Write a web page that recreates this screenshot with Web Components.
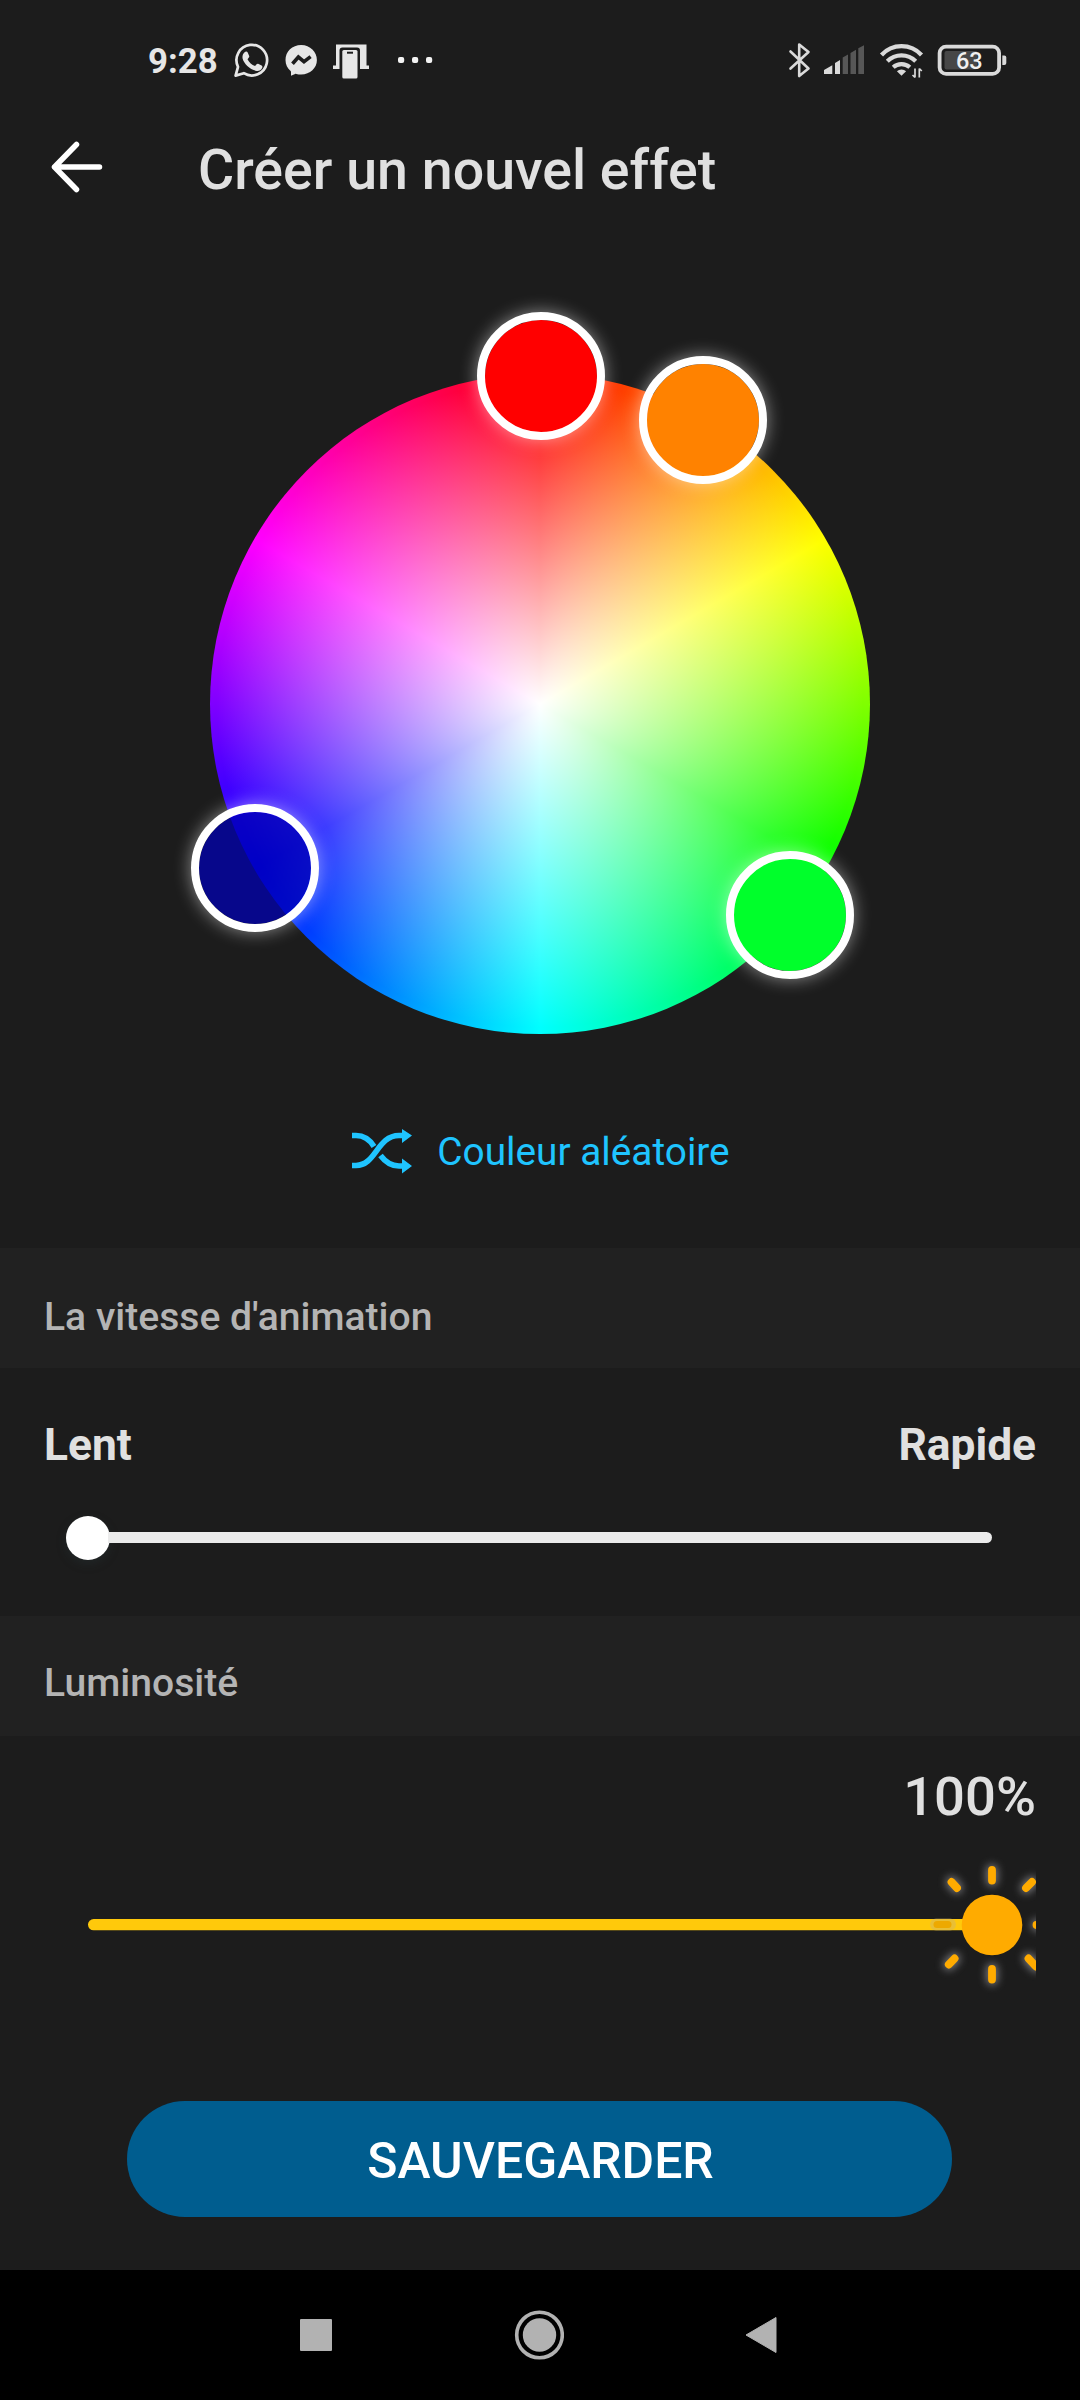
<!DOCTYPE html>
<html lang="fr">
<head>
<meta charset="utf-8">
<title>Créer un nouvel effet</title>
<style>
html,body{margin:0;padding:0;background:#1c1c1c}
body{width:1080px;height:2400px;overflow:hidden;font-family:Roboto,"Noto Sans",sans-serif;color:#e0e0e0}
</style>
</head>
<body>
<effect-screen></effect-screen>
<script>
const define = (name, html, setup) => customElements.define(name, class extends HTMLElement {
  constructor() {
    super();
    const t = document.createElement('template');
    t.innerHTML = html;
    this.attachShadow({mode: 'open'}).append(t.content.cloneNode(true));
  }
  connectedCallback() { if (setup) setup(this, this.shadowRoot); }
});

define('status-bar', `
<style>
:host{display:flex;height:120px;box-sizing:border-box;padding:0 72px 0 148px;justify-content:space-between;align-items:center;color:#e6e6e6}
div{display:flex;align-items:center;height:120px}
.time{font-size:34.8px;font-weight:700;line-height:40px;width:85px;padding-top:1px;box-sizing:border-box}
svg{display:block;flex:none}
</style>
<div>
  <span class="time">9:28</span>
  <svg width="210" height="120" viewBox="233 0 210 120">
    <path d="M235.6 75.6 L238 66.8 A15.3 15.3 0 1 1 243.8 73.2 Z" fill="none" stroke="#e6e6e6" stroke-width="2.7" stroke-linejoin="round"/>
    <path d="M244.6 52.2c1-.9 2.6-.9 3.1.3l1.5 3.6c.3.8-.2 1.5-1.7 3.1 1.8 3.4 4.2 5.5 7.6 6.9 1.6-2 2.1-2.7 3-2.3l3.5 1.7c1 .5.9 1.6.5 2.6-.8 2.1-3.3 3.2-5.3 2.9-6.9-1.2-12.9-7.3-14.2-12.5-.5-2.6.4-4.9 2-6.3z" fill="#e6e6e6"/>
    <path d="M301.2 45C292.2 45 285.5 51.5 285.5 60c0 4.600 1.900 8.400 5.100 11.100.3.300.4.700.4 1.100v3.600l4.100-1.800c.4-.2.800-.2 1.200-.1 1.600.4 3.200.6 4.900.6 9 0 15.700-6.500 15.700-14.500S310.200 45 301.200 45z" fill="#e6e6e6"/>
    <path d="M292.500 63.800 L298.400 57 L304 61.600 L310.600 56.600" fill="none" stroke="#1c1c1c" stroke-width="3.600" stroke-linejoin="miter"/>
    <path d="M336 44.500h30.500v21h2.500v3.500h-36v-3.500h3z" fill="#e6e6e6"/>
    <rect x="339.500" y="47.500" width="20.500" height="33" rx="3" fill="#1c1c1c"/>
    <rect x="342.300" y="50" width="15.200" height="28.500" rx="1.500" fill="#e6e6e6"/>
    <path d="M347 52.700h6" stroke="#1c1c1c" stroke-width="2"/>
    <g fill="#f2f2f2"><rect x="398" y="57" width="6.200" height="6" rx="2"/><rect x="412" y="57" width="6.200" height="6" rx="2"/><rect x="426" y="57" width="6.200" height="6" rx="2"/></g>
  </svg>
</div>
<svg width="222" height="120" viewBox="786 0 222 120">
  <path d="M790.500 51.500 L808.500 68.500 L799.200 76 V44.500 L808.500 52 L790.500 68.500" fill="none" stroke="#dadada" stroke-width="2.600" stroke-linejoin="round" stroke-linecap="round"/>
  <path d="M824 74v-4l8.300-4.800V74z M835 74V63l5-3v14z" fill="#dadada"/>
  <path d="M842.700 74V57.500l5.300-3V74z M850.500 74V53l5.500-3.200V74z M858.300 74V48.300l5.700-3V74z" fill="#575757"/>
  <g fill="none" stroke="#dadada" stroke-width="4.200">
    <path d="M881.500 55a27 27 0 0 1 40 0"/>
    <path d="M887.300 61.200a20 20 0 0 1 28.400 0"/>
    <path d="M893.200 67.200a12.500 12.500 0 0 1 16.600 0"/>
  </g>
  <path d="M901.500 75.800l-4.600-4.600a6.800 6.800 0 0 1 9.200 0z" fill="#dadada"/>
  <path d="M915 68.500v9M912.500 75l2.500 2.500M919.300 77.500v-9M921.800 71l-2.500-2.500" fill="none" stroke="#dadada" stroke-width="1.700"/>
  <rect x="939.600" y="46.600" width="59.500" height="27.300" rx="6.500" fill="none" stroke="#dadada" stroke-width="3.800"/>
  <rect x="944.500" y="51" width="33" height="18.500" rx="2" fill="#474747"/>
  <path d="M1002.300 55.500h2a2 2 0 0 1 2 2v5.500a2 2 0 0 1-2 2h-2z" fill="#dadada"/>
  <text x="969.300" y="69" text-anchor="middle" font-size="23.500" font-weight="500" fill="#f0f0f0" font-family="Roboto,sans-serif">63</text>
</svg>`);

define('app-header', `
<style>
:host{display:flex;height:100px;align-items:center;padding-left:50px;box-sizing:border-box}
svg{display:block;flex:none;width:54px;margin-bottom:6px}
h1{margin:0 0 0 94px;font-size:55.5px;font-weight:500;line-height:64px;padding-top:2px;white-space:nowrap;color:#e0e0e0}
</style>
<svg width="54" height="60" viewBox="50 137 54 60"><path d="M76.500 144.500L54.500 167L76.500 189.500M54.500 167H99.500" fill="none" stroke="#fff" stroke-width="5.500" stroke-linecap="round" stroke-linejoin="round"/></svg>
<h1><slot></slot></h1>`);

define('color-handle', `
<style>
:host{position:absolute;width:112px;height:112px;border:8px solid #fff;border-radius:50%;background:var(--fill);background-clip:padding-box;transform:translate(-50%,-50%);box-shadow:0 0 17px 0 rgba(255,255,255,.5)}
</style>`, el => {
  el.style.left = el.getAttribute('x') + 'px';
  el.style.top = el.getAttribute('y') + 'px';
  el.style.setProperty('--fill', el.getAttribute('color'));
});

define('color-wheel', `
<style>
:host{display:flex;justify-content:center;height:660px;margin-top:154px}
.disc{position:relative;width:660px;height:660px;border-radius:50%;background:radial-gradient(circle closest-side,#fff 0%,rgba(255,255,255,0) 98%),conic-gradient(#f00,#ff0,#0f0,#0ff,#00f,#f0f,#f00)}
</style>
<div class="disc"><slot></slot></div>`);

define('random-color', `
<style>
:host{display:flex;justify-content:center;align-items:center;height:60px;margin-top:88px;color:#1fc4ff;font-size:38.8px;line-height:46px}
svg{display:block;margin-right:25px}
span{white-space:nowrap}
</style>
<svg width="62" height="46" viewBox="350 1129 62 46">
  <g fill="none" stroke="#1fc4ff" stroke-width="5.600">
    <path d="M352 1165.500H356C376 1165.500 377 1135.500 399 1135.500H403"/>
    <path d="M352 1135.500H356C365 1135.500 370 1140 374 1146.500M380.500 1155.500C385 1161.500 390 1166 399 1166H403"/>
  </g>
  <path d="M402 1129L412 1135.500L402 1143ZM402 1158.500L412 1166L402 1173.500Z" fill="#1fc4ff"/>
</svg>
<span><slot></slot></span>`);

define('section-title', `
<style>
:host{display:flex;height:120px;align-items:center;padding:17px 44px 0;box-sizing:border-box;background:#212121;color:#b4b4b4;font-size:39.1px;font-weight:500;line-height:46px}
:host([compact]){padding-top:13px}
</style><slot></slot>`);

define('speed-slider', `
<style>
:host{display:block;height:248px;box-sizing:border-box;padding:50px 44px 0}
.labels{display:flex;justify-content:space-between;font-size:44.3px;font-weight:700;line-height:54px;color:#e0e0e0}
.row{display:flex;align-items:center;margin-top:43.5px;height:44px;padding:0 44px 0 22px}
.thumb{width:44px;height:44px;border-radius:50%;background:#fff;flex:none;box-shadow:0 4px 10px rgba(40,55,58,.35)}
.track{flex:1;height:11px;margin-left:-2px;border-radius:0 6px 6px 0;background:#ebebeb}
</style>
<div class="labels"><slot name="low"></slot><slot name="high"></slot></div>
<div class="row"><div class="thumb"></div><div class="track"></div></div>`);

define('brightness-slider', `
<style>
:host{display:block;height:365px;box-sizing:border-box;padding:28px 44px 0}
.value{text-align:right;font-size:54.4px;font-weight:500;line-height:66px;color:#e0e0e0}
svg{display:block;margin-top:25px}
</style>
<div class="value"><slot></slot></div>
<svg width="992" height="140" viewBox="44 1855 992 140">
  <defs><filter id="halo" x="-60%" y="-60%" width="220%" height="220%"><feGaussianBlur stdDeviation="4"/></filter>
  <g id="rays" stroke-linecap="round" fill="none">
    <path d="M992 1870V1880.500M992 1969V1979.500M951.500 1882L957 1888M1032 1882L1026 1888M948.800 1964.500L954.600 1958.500M1028.500 1958.500L1036 1966.500M1036.500 1925H1047"/>
  </g></defs>
  <rect x="88" y="1919" width="900" height="11.300" rx="5.600" fill="#ffc90b"/>
  <use href="#rays" stroke="#909094" stroke-width="11" filter="url(#halo)" opacity=".85"/>
  <path d="M936 1924.500H950" stroke="#d0b468" stroke-width="12" stroke-linecap="round" opacity=".45"/>
  <path d="M937 1924.500H948" stroke="#eda900" stroke-width="7" stroke-linecap="round"/>
  <use href="#rays" stroke="#ffab00" stroke-width="7.800"/>
  <circle cx="992" cy="1925" r="30.300" fill="#ffab00"/>
</svg>`);

define('save-button', `
<style>
:host{display:flex;justify-content:center;height:169px;padding-right:2px}
button{all:unset;display:flex;align-items:center;justify-content:center;width:825px;height:116px;border-radius:58px;background:#005d8f;color:#fff;font:500 49.9px/60px Roboto,sans-serif;padding:3px 0 0 3px;box-sizing:border-box}
</style><button><slot></slot></button>`);

define('nav-bar', `
<style>
:host{display:flex;height:130px;background:#000;align-items:center;justify-content:space-between;padding:0 303px 0 300px;box-sizing:border-box}
svg{display:block}
</style>
<svg width="32" height="38"><rect y="3" width="32" height="32" rx="1" fill="#b2b2b2"/></svg>
<svg width="50" height="50"><circle cx="25.500" cy="25" r="22.800" fill="none" stroke="#b2b2b2" stroke-width="3.600"/><circle cx="25.500" cy="25" r="16.700" fill="#b2b2b2"/></svg>
<svg width="32" height="38"><path d="M1 19L31 1.500V36.500Z" fill="#b2b2b2" stroke="#b2b2b2" stroke-linejoin="round"/></svg>`);

define('effect-screen', `
<style>:host{display:flex;flex-direction:column;width:1080px;height:2400px;background:#1c1c1c;overflow:hidden}
:host>*{flex:none}
random-color{margin-bottom:66px}</style>
<status-bar></status-bar>
<app-header>Créer un nouvel effet</app-header>
<color-wheel>
  <color-handle x="331" y="2" color="#ff0000"></color-handle>
  <color-handle x="493" y="46" color="#ff8200"></color-handle>
  <color-handle x="45" y="494" color="rgba(0,0,178,.74)"></color-handle>
  <color-handle x="580" y="541" color="#00ff2b"></color-handle>
</color-wheel>
<random-color>Couleur aléatoire</random-color>
<section-title>La vitesse d'animation</section-title>
<speed-slider><span slot="low">Lent</span><span slot="high">Rapide</span></speed-slider>
<section-title compact>Luminosité</section-title>
<brightness-slider>100%</brightness-slider>
<save-button>SAUVEGARDER</save-button>
<nav-bar></nav-bar>`);
</script>
</body>
</html>
